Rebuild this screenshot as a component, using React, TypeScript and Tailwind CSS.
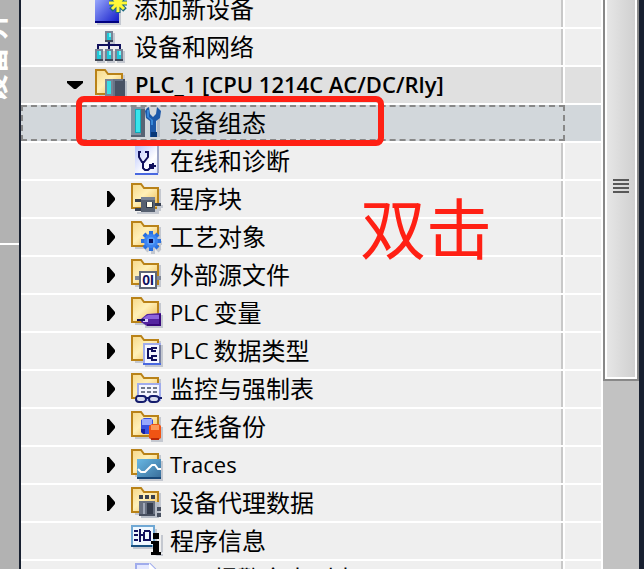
import type { ReactNode } from "react";

const Svg = ({ children }: { children: ReactNode }) => (
  <svg className="shrink-0" width="32" height="36" viewBox="0 0 32 36" aria-hidden="true">
    {children}
  </svg>
);

const Folder = ({ children }: { children: ReactNode }) => (
  <Svg>
    <defs>
      <linearGradient id="folder" x1="0" y1="0" x2="1" y2="1">
        <stop offset="0" stopColor="#f6d88a" />
        <stop offset="0.45" stopColor="#fff0b8" />
        <stop offset="1" stopColor="#f0b84c" />
      </linearGradient>
    </defs>
    <path d="M28 8h2v22H4v-2h24z" fill="#c4c8d0" />
    <path d="M1 27V3h9l3 4h14v20z" fill="url(#folder)" stroke="#b98218" strokeWidth="2" />
    {children}
  </Svg>
);

const AddDeviceIcon = () => (
  <Svg>
    <defs>
      <linearGradient id="newPage" x1="0" y1="0" x2="1" y2="1">
        <stop offset="0" stopColor="#a0b0ff" />
        <stop offset="1" stopColor="#1018c8" />
      </linearGradient>
    </defs>
    <path d="M2 8h24v26H2z" fill="#c4c8d0" />
    <path d="M0 6h24v26H0z" fill="url(#newPage)" />
    <path d="M0 30h24v2H0z" fill="#000080" />
    <path d="M23 2v20M14 12h18M16 5l14 14M30 5L16 19" stroke="#1c6a80" strokeWidth="5" />
    <path d="M23 3v18M14 12h18M17 6l12 12M29 6L17 18" stroke="#fff838" strokeWidth="3" />
  </Svg>
);

const NetworkIcon = () => (
  <Svg>
    <path d="M12 4h8v11h-8zM2 22h8v12H2zM12 22h8v12h-8zM22 22h8v12h-8z" fill="#c4c8d0" />
    <path d="M14 13v8M3 20v-4h22v4" fill="none" stroke="#10105c" strokeWidth="2" />
    <path d="M10 2h8v11h-8zM0 20h8v12H0zM10 20h8v12h-8zM20 20h8v12h-8z" fill="#788496" />
    <path d="M10 11h8v2h-8zM0 30h8v2H0zM10 30h8v2h-8zM20 30h8v2h-8z" fill="#404858" />
    <path d="M12 4h4v7h-4zM2 22h4v8H2zM12 22h4v8h-4zM22 22h4v8h-4z" fill="#20c8d8" />
    <path d="M14 4h2v4h-2zM4 22h2v4H4zM14 22h2v4h-2zM24 22h2v4h-2z" fill="#70f4f8" />
  </Svg>
);

const PlcIcon = () => (
  <Folder>
    <path d="M12 14h20v17H12z" fill="#b8bec8" />
    <path d="M10 12h8v17h-8z" fill="#788496" />
    <path d="M12 14h4v13h-4z" fill="#38dce4" />
    <path d="M18 12h12v17H18z" fill="#485264" />
    <path d="M18 12h2v17h-2zM20 12h8v2h-8z" fill="#687488" />
  </Folder>
);

const ConfigIcon = () => (
  <Svg>
    <path d="M0 2h14v30H0z" fill="#8490a0" />
    <path d="M10 4h4v28H0v-2h10z" fill="#586474" />
    <path d="M4 4h6v24H4z" fill="#10a8b8" />
    <path d="M5 5h4v22H5z" fill="#38e4ec" />
    <path d="M26 12h3v20h-3z" fill="#b4bcc8" />
    <path d="M16 3l2-1 1 7 3 3 3-3 1-7 4 4-1 7-4 3v16h-6V16l-4-3-1-7z" fill="#1c58a8" />
    <path d="M16 5h2v7l4 3v5h-2v-5l-4-3z" fill="#3888d8" />
    <path d="M20 27h6v5h-6z" fill="#083878" />
  </Svg>
);

const DiagnosticsIcon = () => (
  <Svg>
    <defs>
      <linearGradient id="diag" x1="0" y1="0" x2="1" y2="1">
        <stop offset="0" stopColor="#b8c4fc" />
        <stop offset="0.6" stopColor="#ffffff" />
        <stop offset="1" stopColor="#d8e0ff" />
      </linearGradient>
    </defs>
    <path d="M4 3h24v29H4z" fill="url(#diag)" />
    <path d="M26 3h2v27h-2z" fill="#a0a8c8" />
    <path d="M4 30h23v2H4z" fill="#4868e0" />
    <path
      d="M10 9H8v5l3 5h2l4-5V9h-3M12 19v6l2 2h3l2-2v-3h2"
      fill="none"
      stroke="#10105c"
      strokeWidth="2"
    />
    <path d="M19 21h2v-1h2v2h2v2h-2v2h-4z" fill="#10105c" />
  </Svg>
);

const BlocksIcon = () => (
  <Folder>
    <path d="M12 29h14v-5h6v3h-4v6H6v-2h6z" fill="#c4c8d0" />
    <path d="M4 18h6v3H4zM4 27h6v3H4zM24 22h6v3h-6z" fill="#384050" />
    <path d="M10 16h14v15H10z" fill="#566070" />
    <path d="M10 16h14v3H10z" fill="#788294" />
    <path d="M15 21h7v6h-7z" fill="#303848" />
    <path d="M16 21h5v5h-5z" fill="#fffbe8" />
  </Folder>
);

const TechIcon = () => (
  <Folder>
    <path d="M22 15v20M13 24h18M15 18l14 14M29 18L15 32" stroke="#c4c8d0" strokeWidth="4" />
    <path d="M20 12v20M10 22h20M13 15l14 14M27 15L13 29" stroke="#2870e0" strokeWidth="4" />
    <circle cx="20" cy="22" r="7" fill="#3c84f0" />
    <circle cx="20" cy="22" r="4" fill="#58a0fc" />
    <path d="M18 20h4v4h-4z" fill="#08105c" />
  </Folder>
);

const SourceIcon = () => (
  <Folder>
    <path d="M4 19h5v4H4zM25 19h5v4h-5z" fill="#808898" />
    <path d="M9 15h16v16H9z" fill="#fff" stroke="#606878" strokeWidth="2" />
    <text
      x="17"
      y="28"
      textAnchor="middle"
      fontFamily="Liberation Sans, sans-serif"
      fontSize="14"
      fontWeight="700"
      fill="#10105c"
    >
      0I
    </text>
  </Folder>
);

const TagIcon = () => (
  <Folder>
    <path d="M14 20h18v13H14z" fill="#c4c8d0" />
    <path d="M10 24l6-5 14-1v13H16l-6-4z" fill="#5424a0" />
    <path d="M12 23l5-3h11v4H13z" fill="#8c64dc" />
    <path d="M28 19h2v12H16v-2h12z" fill="#38087c" />
    <path d="M12 24h5v3h-5z" fill="#d8c8fc" />
    <path d="M6 24h8v2H6z" fill="#10105c" />
  </Folder>
);

const TypesIcon = () => (
  <Folder>
    <path d="M14 12h18v22H14z" fill="#c4c8d0" />
    <path d="M13 11h16v20H13z" fill="#f4f6ff" stroke="#a0acec" strokeWidth="2" />
    <path d="M12 30h18v2H12z" fill="#4868e0" />
    <path d="M28 12h2v18h-2z" fill="#7880a0" />
    <path
      d="M17 15v11M17 16h3M17 25h3M21 14v5M21 22v6M21 15h5M21 18h4M21 23h5M21 27h5"
      fill="none"
      stroke="#10105c"
      strokeWidth="2"
    />
  </Folder>
);

const WatchIcon = () => (
  <Folder>
    <path d="M7 13h22v16H7z" fill="#f4f6ff" stroke="#a0acec" strokeWidth="2" />
    <path
      d="M10 17h4M16 17h4M22 17h4M10 21h4M16 21h4M22 21h4"
      stroke="#70788c"
      strokeWidth="2"
    />
    <path
      d="M5 28c0-4 3-3 4-3h3c2 0 3 1 3 3s-2 3-4 3H8c-2 0-3-1-3-3zM18 28c0-2 1-3 3-3h3c3 0 4 1 4 3s-2 3-4 3h-3c-2 0-3-1-3-3zM15 27h3M28 27h3"
      fill="#d8dcec"
      stroke="#141c6c"
      strokeWidth="2"
    />
  </Folder>
);

const BackupIcon = () => (
  <Folder>
    <path d="M20 18h12v15H20z" fill="#c4c8d0" />
    <path d="M10 11l3-2h7l2 2v13l-3 1h-6l-3-2z" fill="#3850e0" />
    <path d="M11 10h10v6H11z" fill="#98a8fc" />
    <path d="M10 20h4v5h-2l-2-2z" fill="#1420a0" />
    <path d="M18 17l3-2h7l2 2v12l-3 2h-6l-3-2z" fill="#f05414" />
    <path d="M20 16h8v5h-8z" fill="#fc9858" />
    <path d="M20 29h8v2h-8z" fill="#b82808" />
  </Folder>
);

const TracesIcon = () => (
  <Folder>
    <defs>
      <linearGradient id="trace" x1="0" y1="0" x2="1" y2="1">
        <stop offset="0" stopColor="#68b8e4" />
        <stop offset="1" stopColor="#386c98" />
      </linearGradient>
    </defs>
    <path d="M8 14h24v20H8z" fill="#c4c8d0" />
    <path d="M6 12h24v20H6z" fill="url(#trace)" />
    <path d="M6 30h24v2H6z" fill="#184878" />
    <path d="M7 22l3 3h4l7-7h3l3 4h3" fill="none" stroke="#fff" strokeWidth="2" />
  </Folder>
);

const ProxyIcon = () => (
  <Folder>
    <path d="M10 17h18v16H10z" fill="#b8bec8" />
    <path d="M8 10h4v4H8zM14 10h4v4h-4zM20 10h4v4h-4z" fill="#384050" />
    <path d="M8 16h16v15H8z" fill="#687080" />
    <path d="M12 18h2v12h-2z" fill="#a0a8b8" />
    <path d="M16 18h6v11h-6z" fill="#343c4c" />
    <path d="M8 29h16v2H8zM26 22h4v4h-4zM26 28h4v4h-4z" fill="#485060" />
  </Folder>
);

const InfoIcon = () => (
  <Svg>
    <path d="M2 26h20v-2H26V6h-2v18H2z" fill="#c4c8d0" />
    <path d="M1 3h22v20H1z" fill="#f0f8ff" stroke="#70a8d4" strokeWidth="2" />
    <path d="M0 22h21v2H0z" fill="#185080" />
    <path
      d="M3 8h4M3 12h4M3 17h4M9 6v13M9 12h5M13 8h6M13 9v9M19 8v10M14 17h5"
      fill="none"
      stroke="#10105c"
      strokeWidth="2"
    />
    <path d="M24 33h8v-2h-2V12h2v17z" fill="#c4c8d0" />
    <path d="M22 10h6v6h-6zM20 18h8v11h2v3H20v-3h2v-8h-2z" fill="#000" />
  </Svg>
);

const AlarmIcon = () => (
  <Svg>
    <path d="M5 32V3h14l6 6v23z" fill="#e4e8ff" stroke="#a0acec" strokeWidth="2" />
    <path d="M18 2l8 8h-8z" fill="#fff" />
  </Svg>
);

type Item = {
  latin?: string;
  text?: string;
  icon: ReactNode;
  arrow?: boolean;
};

const children: Item[] = [
  { text: "在线和诊断", icon: <DiagnosticsIcon /> },
  { text: "程序块", icon: <BlocksIcon />, arrow: true },
  { text: "工艺对象", icon: <TechIcon />, arrow: true },
  { text: "外部源文件", icon: <SourceIcon />, arrow: true },
  { latin: "PLC", text: "变量", icon: <TagIcon />, arrow: true },
  { latin: "PLC", text: "数据类型", icon: <TypesIcon />, arrow: true },
  { text: "监控与强制表", icon: <WatchIcon />, arrow: true },
  { text: "在线备份", icon: <BackupIcon />, arrow: true },
  { latin: "Traces", icon: <TracesIcon />, arrow: true },
  { text: "设备代理数据", icon: <ProxyIcon />, arrow: true },
  { text: "程序信息", icon: <InfoIcon /> },
  { latin: "PLC", text: "报警文本列表", icon: <AlarmIcon /> },
];

const Label = ({ icon, latin, text }: Item) => (
  <button type="button" className="flex h-9 items-center gap-[7px] whitespace-nowrap">
    {icon}
    <span className="flex items-center gap-[5px]">
      {latin && <span className="font-['Open_Sans',sans-serif] text-[22px]">{latin}</span>}
      {text && <span className="pb-0.5">{text}</span>}
    </span>
  </button>
);

const Row = ({ item }: { item: Item }) => (
  <li className="flex h-[38px] shrink-0 gap-0.5 border-b-2 border-white">
    <div className="flex min-w-0 grow items-center border-r-2 border-[#c8c8c8] bg-[#efefef] pl-[86px]">
      <span className="w-6 shrink-0">
        {item.arrow && (
          <button type="button" aria-label="展开" className="block">
            <svg width="8" height="16" viewBox="0 0 8 16">
              <path d="M0 0h2l6 7v2l-6 7H0z" />
            </svg>
          </button>
        )}
      </span>
      <Label {...item} />
    </div>
    <div className="w-9 shrink-0 bg-[#efefef]" />
  </li>
);

const TopRow = ({ item }: { item: Item }) => (
  <li className="flex h-[38px] shrink-0 gap-0.5 border-b-2 border-white">
    <div className="flex min-w-0 grow items-center border-r-2 border-[#c8c8c8] bg-[#efefef] pl-[74px]">
      <Label {...item} />
    </div>
    <div className="w-9 shrink-0 bg-[#efefef]" />
  </li>
);

const App = () => {
  return (
    <div className="flex h-screen overflow-hidden bg-white font-['Noto_Sans_CJK_SC',sans-serif] text-2xl text-black">
      <aside className="flex w-[21px] shrink-0 flex-col border-r-2 border-[#182030] bg-[#b2b2b2]">
        <div className="flex h-[245px] shrink-0 items-end justify-end overflow-hidden border-b-2 border-white pr-2.5 pb-[141px]">
          <span className="rotate-180 text-[28px] leading-8 font-bold whitespace-nowrap text-white [text-orientation:sideways] [writing-mode:vertical-rl]">
            设备 开
          </span>
        </div>
      </aside>

      <ul className="-mt-[9px] flex min-w-0 grow flex-col">
        <TopRow item={{ text: "添加新设备", icon: <AddDeviceIcon /> }} />
        <TopRow item={{ text: "设备和网络", icon: <NetworkIcon /> }} />

        <li className="flex h-[38px] shrink-0 gap-0.5 border-b-2 border-white">
          <div className="flex min-w-0 grow items-center gap-3 border-r-2 border-[#c8c8c8] bg-[#e0e0e0] pl-[46px]">
            <button type="button" aria-label="折叠">
              <svg width="16" height="8" viewBox="0 0 16 8">
                <path d="M0 0h16v2L9 8H7L0 2z" />
              </svg>
            </button>
            <button type="button" className="flex h-9 items-center gap-2 whitespace-nowrap">
              <PlcIcon />
              <span className="font-['Open_Sans',sans-serif] text-[22px] font-semibold">
                PLC_1 [CPU 1214C AC/DC/Rly]
              </span>
            </button>
          </div>
          <div className="w-9 shrink-0 bg-[#e0e0e0]" />
        </li>

        <li className="relative z-10 flex h-[38px] shrink-0 border-b-2 border-white">
          <div className="flex min-w-0 grow items-center border-2 border-dashed border-[#888888] bg-[#d2d7db] pl-[108px]">
            <Label text="设备组态" icon={<ConfigIcon />} />
          </div>
          <div className="w-9 shrink-0 bg-[#d2d7db]" />
          <div className="pointer-events-none absolute -top-[9px] left-[55px] h-[50px] w-[308px] rounded-lg border-[6px] border-[#ff2014]" />
          <span className="pointer-events-none absolute top-[87px] left-[339px] text-[66px] leading-none whitespace-nowrap text-[#ff2014]">
            双击
          </span>
        </li>

        {children.map((item) => (
          <Row key={`${item.latin ?? ""}${item.text ?? ""}`} item={item} />
        ))}
      </ul>

      <div className="ml-0.5 w-9 shrink-0 bg-[#c2c2c2]">
        <div className="-mt-2.5 flex h-[391px] items-center justify-center border-2 border-[#888888] bg-white p-0.5">
          <div className="flex h-full w-full items-center justify-center bg-linear-to-r from-[#e6e6e6] to-[#d0d0d0]">
            <div className="flex w-4 flex-col gap-0.5">
              <span className="h-0.5 bg-[#585858]" />
              <span className="h-0.5 bg-[#585858]" />
              <span className="h-0.5 bg-[#585858]" />
              <span className="h-0.5 bg-[#585858]" />
            </div>
          </div>
        </div>
      </div>
      <div className="w-[5px] shrink-0 bg-[#182030]" />
    </div>
  );
};

export default App;
